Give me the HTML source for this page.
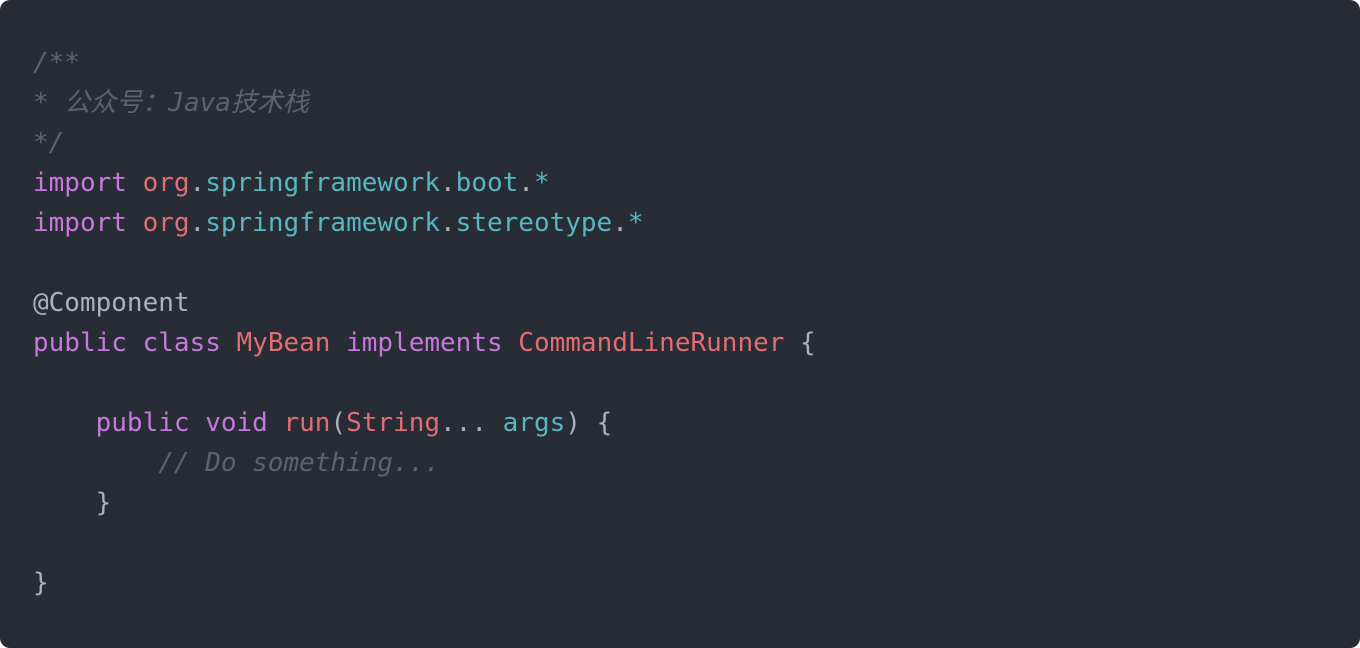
<!DOCTYPE html>
<html><head><meta charset="utf-8"><style>
html,body{margin:0;padding:0;background:#fff;}
.box{width:1360px;height:648px;background:#282c34;border-radius:10px;box-sizing:border-box;padding:43px 0 0 33px;overflow:hidden;}
pre{margin:0;font-family:"DejaVu Sans Mono","Liberation Mono","Noto Sans CJK SC",monospace;font-size:26px;line-height:40px;color:#abb2bf;}
.c{color:#5c6370;font-style:italic;}
.k{color:#c678dd;}
.r{color:#e06c75;}
.t{color:#56b6c2;}
</style></head><body><div class="box"><pre><span class="c">/**</span>
<span class="c">* 公众号：Java技术栈</span>
<span class="c">*/</span>
<span class="k">import</span> <span class="r">org</span>.<span class="t">springframework</span>.<span class="t">boot</span>.<span class="t">*</span>
<span class="k">import</span> <span class="r">org</span>.<span class="t">springframework</span>.<span class="t">stereotype</span>.<span class="t">*</span>

@Component
<span class="k">public</span> <span class="k">class</span> <span class="r">MyBean</span> <span class="k">implements</span> <span class="r">CommandLineRunner</span> {

    <span class="k">public</span> <span class="k">void</span> <span class="r">run</span>(<span class="r">String</span>... <span class="t">args</span>) {
        <span class="c">// Do something...</span>
    }

}</pre></div></body></html>
